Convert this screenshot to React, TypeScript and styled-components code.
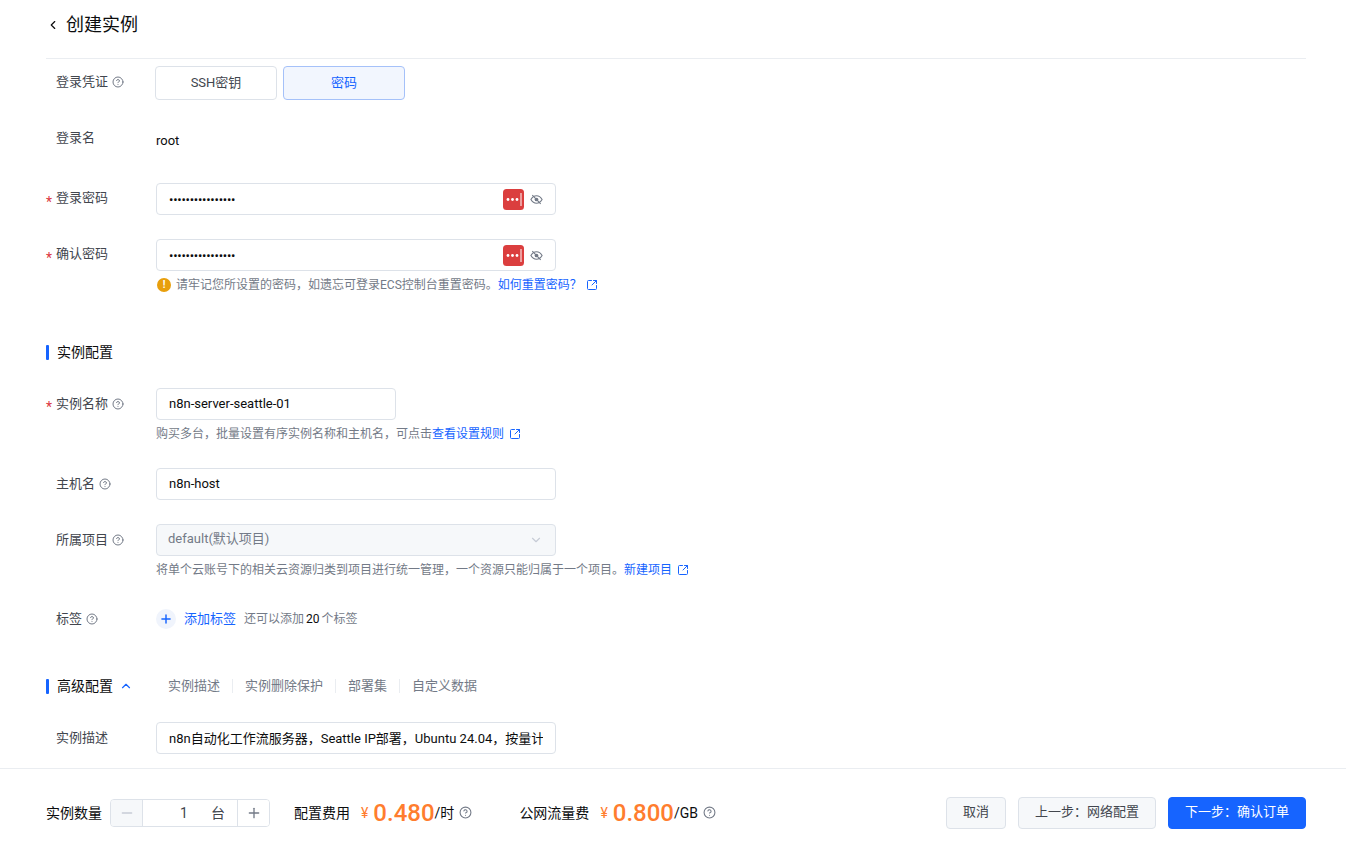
import React from 'react';
import styled, { createGlobalStyle } from 'styled-components';
import { ChevronDown, ChevronLeft, ChevronUp, CircleHelp, Minus, Plus, SquareArrowOutUpRight } from 'lucide-react';

const GlobalStyle = createGlobalStyle`
  html, body {
    margin: 0;
    height: 100%;
    background: #fff;
  }
  body {
    font-family: Roboto, "Noto Sans CJK SC", sans-serif;
    font-size: 13px;
    line-height: 20px;
    color: #0c0d0e;
  }
  * {
    box-sizing: border-box;
  }
`;

const Page = styled.div`
  width: 1346px;
  height: 856px;
  display: flex;
  flex-direction: column;
  overflow: hidden;
`;

const Header = styled.header`
  height: 59px;
  flex: none;
  margin: 0 40px 0 46px;
  display: flex;
  align-items: flex-start;
  gap: 6px;
  padding-top: 12px;
  border-bottom: 1px solid #eaedf1;
`;

const BackButton = styled.span`
  display: flex;
  height: 26px;
  align-items: center;
  color: #0c0d0e;
`;

const Title = styled.h1`
  margin: 0;
  font-size: 18px;
  line-height: 26px;
  font-weight: 400;
  color: #0c0d0e;
`;

const Content = styled.main`
  flex: 1;
  min-height: 0;
  overflow: hidden;
  padding: 0 40px 0 46px;
`;

const Row = styled.div<{ $top: number }>`
  display: flex;
  align-items: flex-start;
  margin-top: ${p => p.$top}px;
`;

const Label = styled.div<{ $required?: boolean; $lift?: number }>`
  position: relative;
  width: 110px;
  flex: none;
  height: 32px;
  padding: 0 0 ${p => (p.$lift ?? 0) * 2}px 10px;
  display: flex;
  align-items: center;
  gap: 4px;
  color: #42464e;

  ${p =>
    p.$required &&
    `&::before {
      content: '*';
      position: absolute;
      left: 0;
      top: 9px;
      color: #db373f;
      font-size: 14px;
      line-height: 20px;
    }`}
`;

const Help = styled(CircleHelp)`
  flex: none;
  color: #737a87;
`;

const Field = styled.div`
  display: flex;
  flex-direction: column;
  min-width: 0;
`;

const TabGroup = styled.div`
  display: flex;
  gap: 6px;
  margin-left: -1px;
`;

const Tab = styled.div<{ $active?: boolean }>`
  width: 122px;
  height: 34px;
  display: flex;
  align-items: center;
  justify-content: center;
  border-radius: 4px;
  border: 1px solid ${p => (p.$active ? '#a5c1f9' : '#dde2e9')};
  background: ${p => (p.$active ? '#f2f6fe' : '#fff')};
  color: ${p => (p.$active ? '#1664ff' : '#42464e')};
`;

const PlainValue = styled.div`
  height: 32px;
  padding-top: 2px;
  display: flex;
  align-items: center;
  color: #0c0d0e;
`;

const InputBox = styled.div<{ $width?: number; $disabled?: boolean }>`
  width: ${p => p.$width ?? 400}px;
  height: 32px;
  display: flex;
  align-items: center;
  padding: 0 12px;
  border: 1px solid #dde2e9;
  border-radius: 4px;
  background: ${p => (p.$disabled ? '#f6f8fa' : '#fff')};
  color: ${p => (p.$disabled ? '#737a87' : '#0c0d0e')};
`;

const TextInput = styled.input`
  flex: 1;
  min-width: 0;
  height: 100%;
  border: 0;
  outline: 0;
  padding: 0 0 2px;
  background: transparent;
  font: inherit;
  color: inherit;
`;

const PasswordInput = styled(TextInput)`
  padding: 0;
  letter-spacing: -0.25px;
`;

const ManagerIcon = styled.svg`
  flex: none;
  margin: 0 6px 0 -1px;
`;

const EyeIcon = styled.svg`
  flex: none;
`;

const SelectText = styled.span`
  flex: 1;
  margin-left: -1px;
  padding-bottom: 2px;
`;

const SelectArrow = styled(ChevronDown)`
  color: #c7ccd6;
`;

const Hint = styled.div`
  display: flex;
  align-items: center;
  height: 16px;
  margin-top: 6px;
  font-size: 12px;
  line-height: 16px;
  color: #737a87;
  white-space: nowrap;
`;

const WarnDot = styled.span`
  width: 14px;
  height: 14px;
  border-radius: 50%;
  background: #e89f0c;
  color: #fff;
  font-size: 10px;
  font-weight: 700;
  line-height: 14px;
  text-align: center;
  margin: 0 5px 0 1px;
`;

const Link = styled.a`
  color: #1664ff;
  text-decoration: none;
`;

const LinkIcon = styled(SquareArrowOutUpRight)<{ $gap: number }>`
  color: #1664ff;
  margin-left: ${p => p.$gap}px;
`;

const SectionTitle = styled.div<{ $top: number }>`
  display: flex;
  align-items: center;
  height: 20px;
  margin-top: ${p => p.$top}px;
  font-size: 14px;
  color: #0c0d0e;
`;

const SectionBar = styled.span`
  width: 3px;
  height: 15px;
  background: #1664ff;
  border-radius: 1px;
  margin-right: 8px;
`;

const CollapseIcon = styled(ChevronUp)`
  color: #1664ff;
  margin-left: 6px;
`;

const AnchorList = styled.div`
  display: flex;
  align-items: center;
  margin-left: 23px;
  font-size: 13px;
  color: #737a87;
`;

const Anchor = styled.span`
  padding: 0 12px;
  line-height: 14px;
  & + & {
    border-left: 1px solid #eaedf1;
  }
`;

const TagRow = styled.div`
  display: flex;
  align-items: center;
  height: 32px;
  font-size: 13px;
`;

const AddCircle = styled.span`
  width: 20px;
  height: 20px;
  border-radius: 50%;
  background: #f0f4fc;
  color: #1664ff;
  display: flex;
  align-items: center;
  justify-content: center;
  margin-right: 8px;
`;

const TagNote = styled.span`
  margin-left: 8px;
  font-size: 12px;
  color: #737a87;

  b {
    font-weight: 400;
    color: #0c0d0e;
    margin: 0 2px;
  }
`;

const Footer = styled.footer`
  height: 88px;
  flex: none;
  border-top: 1px solid #eaedf1;
  padding: 0 40px 0 46px;
  display: flex;
  align-items: center;
  font-size: 14px;
`;

const FooterLabel = styled.span<{ $gap?: number }>`
  color: #0c0d0e;
  margin-left: ${p => p.$gap ?? 0}px;
  white-space: nowrap;
`;

const Stepper = styled.div`
  width: 160px;
  height: 28px;
  margin-left: 8px;
  display: flex;
  align-items: stretch;
  border: 1px solid #dde2e9;
  border-radius: 4px;
  overflow: hidden;
`;

const StepButton = styled.span<{ $disabled?: boolean }>`
  width: 31px;
  flex: none;
  display: flex;
  align-items: center;
  justify-content: center;
  background: ${p => (p.$disabled ? '#f6f8fa' : '#fff')};
  color: ${p => (p.$disabled ? '#c7ccd6' : '#737a87')};
`;

const StepValue = styled.span`
  flex: 1;
  display: flex;
  align-items: center;
  border-left: 1px solid #dde2e9;
  border-right: 1px solid #dde2e9;
  padding: 0 12px 0 37px;
  color: #42464e;
`;

const StepNumber = styled.span`
  flex: 1;
`;

const Price = styled.span`
  display: flex;
  align-items: center;
  margin-left: 11px;
  white-space: nowrap;
  color: #0c0d0e;
`;

const Currency = styled.span`
  color: #ff7d2e;
  font-size: 14px;
  margin-right: 5px;
`;

const Amount = styled.span`
  color: #ff7d2e;
  font-size: 24px;
  line-height: 28px;
  font-weight: 500;
`;

const PriceHelp = styled(Help)`
  margin-left: 5px;
`;

const Actions = styled.div`
  margin-left: auto;
  display: flex;
  gap: 12px;
  font-size: 13px;
`;

const Button = styled.button<{ $primary?: boolean; $width: number }>`
  width: ${p => p.$width}px;
  height: 32px;
  padding: 0 0 2px;
  border-radius: 4px;
  border: 1px solid ${p => (p.$primary ? '#1664ff' : '#dde2e9')};
  background: ${p => (p.$primary ? '#1664ff' : '#f6f8fa')};
  color: ${p => (p.$primary ? '#fff' : '#42464e')};
  font: inherit;
`;

const PasswordManager = () => (
  <ManagerIcon width="21" height="21" viewBox="0 0 21 21">
    <rect width="21" height="21" rx="3.5" fill="#db3e3e" />
    <circle cx="5" cy="10.500" r="1.400" fill="#fff" />
    <circle cx="9.500" cy="10.500" r="1.400" fill="#fff" />
    <circle cx="14" cy="10.500" r="1.400" fill="#fff" />
    <rect x="17.500" y="4" width="1" height="13" fill="#fff" />
  </ManagerIcon>
);

const EyeOff = () => (
  <EyeIcon width="13" height="13" viewBox="0 0 14 14" fill="none" stroke="#737a87" strokeWidth="1.200">
    <path d="M1 7c1.500-2.600 3.600-4 6-4s4.500 1.400 6 4c-1.500 2.600-3.600 4-6 4s-4.500-1.400-6-4z" />
    <circle cx="7" cy="7" r="2" fill="#737a87" stroke="none" />
    <path d="M2.500 2.200l9 9.600" />
  </EyeIcon>
);

const PasswordField = ({ value }: { value: string }) => (
  <InputBox>
    <PasswordInput type="password" value={value} readOnly />
    <PasswordManager />
    <EyeOff />
  </InputBox>
);

const App = () => (
  <Page>
    <GlobalStyle />
    <Header>
      <BackButton>
        <ChevronLeft size={14} strokeWidth={2} />
      </BackButton>
      <Title>创建实例</Title>
    </Header>
    <Content>
      <Row $top={7}>
        <Label>
          登录凭证 <Help size={12} />
        </Label>
        <TabGroup>
          <Tab>SSH密钥</Tab>
          <Tab $active>密码</Tab>
        </TabGroup>
      </Row>
      <Row $top={24}>
        <Label $lift={2}>登录名</Label>
        <PlainValue>root</PlainValue>
      </Row>
      <Row $top={27}>
        <Label $required $lift={1}>
          登录密码
        </Label>
        <PasswordField value="Passw0rd!Passw0r" />
      </Row>
      <Row $top={24}>
        <Label $required $lift={1}>
          确认密码
        </Label>
        <Field>
          <PasswordField value="Passw0rd!Passw0r" />
          <Hint>
            <WarnDot>!</WarnDot>
            请牢记您所设置的密码，如遗忘可登录ECS控制台重置密码。
            <Link>如何重置密码？</Link>
            <LinkIcon size={12} $gap={4} />
          </Hint>
        </Field>
      </Row>
      <SectionTitle $top={49}>
        <SectionBar />
        实例配置
      </SectionTitle>
      <Row $top={26}>
        <Label $required>
          实例名称 <Help size={12} />
        </Label>
        <Field>
          <InputBox $width={240}>
            <TextInput value="n8n-server-seattle-01" readOnly />
          </InputBox>
          <Hint>
            购买多台，批量设置有序实例名称和主机名，可点击<Link>查看设置规则</Link>
            <LinkIcon size={12} $gap={5} />
          </Hint>
        </Field>
      </Row>
      <Row $top={26}>
        <Label>
          主机名 <Help size={12} />
        </Label>
        <InputBox>
          <TextInput value="n8n-host" readOnly />
        </InputBox>
      </Row>
      <Row $top={24}>
        <Label>
          所属项目 <Help size={12} />
        </Label>
        <Field>
          <InputBox $disabled>
            <SelectText>default(默认项目)</SelectText>
            <SelectArrow size={14} />
          </InputBox>
          <Hint>
            将单个云账号下的相关云资源归类到项目进行统一管理，一个资源只能归属于一个项目。<Link>新建项目</Link>
            <LinkIcon size={12} $gap={5} />
          </Hint>
        </Field>
      </Row>
      <Row $top={25}>
        <Label>
          标签 <Help size={12} />
        </Label>
        <TagRow>
          <AddCircle>
            <Plus size={14} strokeWidth={2.5} />
          </AddCircle>
          <Link>添加标签</Link>
          <TagNote>
            还可以添加<b>20</b>个标签
          </TagNote>
        </TagRow>
      </Row>
      <SectionTitle $top={41}>
        <SectionBar />
        高级配置
        <CollapseIcon size={14} strokeWidth={2} />
        <AnchorList>
          <Anchor>实例描述</Anchor>
          <Anchor>实例删除保护</Anchor>
          <Anchor>部署集</Anchor>
          <Anchor>自定义数据</Anchor>
        </AnchorList>
      </SectionTitle>
      <Row $top={26}>
        <Label>实例描述</Label>
        <InputBox>
          <TextInput value="n8n自动化工作流服务器，Seattle IP部署，Ubuntu 24.04，按量计费" readOnly />
        </InputBox>
      </Row>
    </Content>
    <Footer>
      <FooterLabel>实例数量</FooterLabel>
      <Stepper>
        <StepButton $disabled>
          <Minus size={16} />
        </StepButton>
        <StepValue>
          <StepNumber>1</StepNumber>台
        </StepValue>
        <StepButton>
          <Plus size={16} />
        </StepButton>
      </Stepper>
      <FooterLabel $gap={24}>配置费用</FooterLabel>
      <Price>
        <Currency>¥</Currency>
        <Amount>0.480</Amount>/时
        <PriceHelp size={13} />
      </Price>
      <FooterLabel $gap={47}>公网流量费</FooterLabel>
      <Price>
        <Currency>¥</Currency>
        <Amount>0.800</Amount>/GB
        <PriceHelp size={13} />
      </Price>
      <Actions>
        <Button $width={60}>取消</Button>
        <Button $width={138}>上一步：网络配置</Button>
        <Button $width={138} $primary>
          下一步：确认订单
        </Button>
      </Actions>
    </Footer>
  </Page>
);

export default App;
